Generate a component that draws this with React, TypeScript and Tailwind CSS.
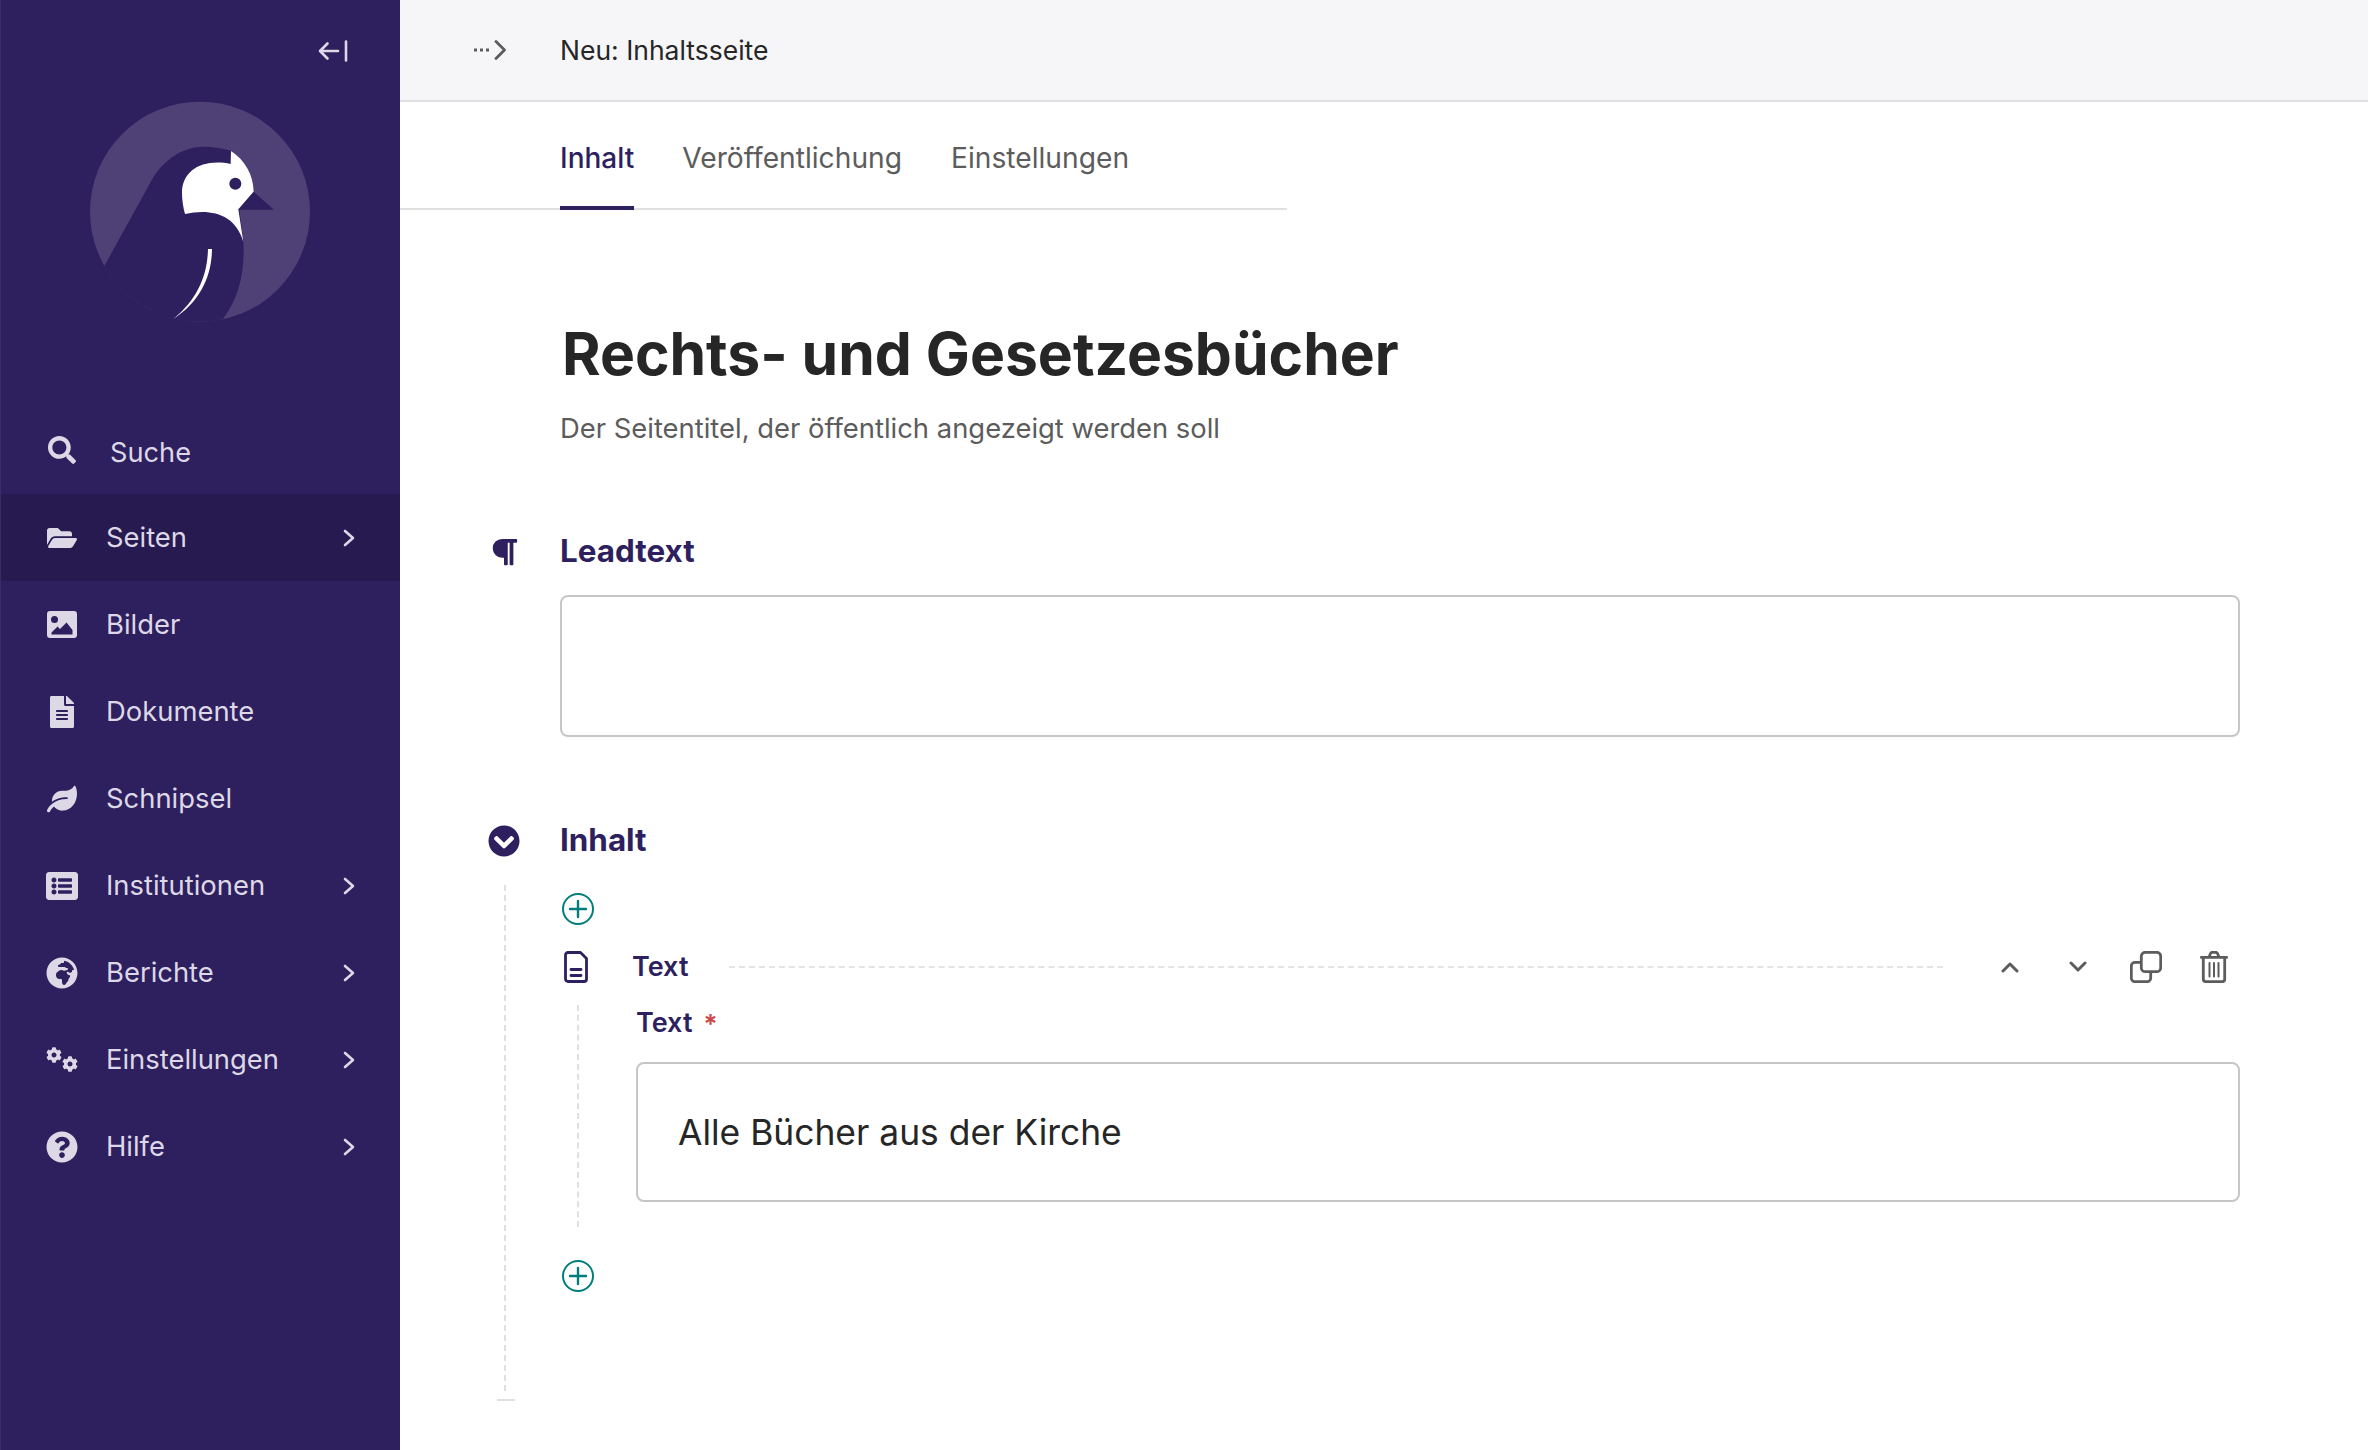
import type { ReactNode } from "react";
import {
    FaSearch,
    FaFolderOpen,
    FaFileAlt,
    FaLeaf,
    FaListAlt,
    FaGlobeAfrica,
    FaCog,
    FaQuestionCircle,
    FaParagraph,
    FaChevronCircleDown,
} from "react-icons/fa";

function ImageIcon() {
    return (
        <svg width="30" height="27" viewBox="0 0 30 27" fill="currentColor">
            <path
                fillRule="evenodd"
                d="M3 0h24a3 3 0 0 1 3 3v21a3 3 0 0 1-3 3H3a3 3 0 0 1-3-3V3a3 3 0 0 1 3-3z M7.500 5a3.500 3.500 0 1 0 0 7 3.500 3.500 0 0 0 0-7z M4.500 23.500h21v-4.500l-6-7.500-6.500 6.500-2.500-2.500-6 6z"
            />
        </svg>
    );
}

const navItems = [
    { label: "Seiten", icon: <FaFolderOpen size={30} />, arrow: true, active: true },
    { label: "Bilder", icon: <ImageIcon /> },
    { label: "Dokumente", icon: <FaFileAlt size={32} /> },
    { label: "Schnipsel", icon: <FaLeaf size={30} /> },
    { label: "Institutionen", icon: <FaListAlt size={32} />, arrow: true },
    { label: "Berichte", icon: <FaGlobeAfrica size={32} />, arrow: true },
    {
        label: "Einstellungen",
        icon: (
            <span className="flex h-[25px] w-[32px] justify-between">
                <FaCog size={16} />
                <FaCog size={16} className="self-end" />
            </span>
        ),
        arrow: true,
    },
    { label: "Hilfe", icon: <FaQuestionCircle size={32} />, arrow: true },
];

function Logo() {
    return (
        <svg width="270" height="270" viewBox="0 0 810 810">
            <circle cx="420" cy="395" r="330" fill="#4f4176" />
            <path
                d="M133 558 L270 310 C300 250 360 200 430 200 C460 200 490 205 515 213 L550 480 C555 570 540 650 488 718 A330 330 0 0 1 133 558 Z"
                fill="#2e1f5e"
            />
            <path
                d="M513 213 L512 252 C430 235 365 270 366 340 C366 360 370 385 375 402 C450 385 525 400 550 485 L535 388 L581 335 C580 285 555 240 513 213 Z"
                fill="#fff"
            />
            <circle cx="526" cy="311" r="18" fill="#2e1f5e" />
            <path d="M581 335 L642 389 L535 389 Z" fill="#2e1f5e" />
            <path d="M444 507 L456 507 C455 590 420 665 340 717 C410 660 442 590 444 507 Z" fill="#fff" />
        </svg>
    );
}

function ChevronRight() {
    return (
        <svg width="12" height="18" viewBox="0 0 12 18" fill="none" stroke="currentColor" strokeWidth="2.6" strokeLinecap="round" strokeLinejoin="round">
            <path d="M2 2l8 7-8 7" />
        </svg>
    );
}

function PlusButton() {
    return (
        <svg width="32" height="32" viewBox="0 0 32 32" fill="none" stroke="#007d7e">
            <circle cx="16" cy="16" r="15" strokeWidth="2" />
            <path d="M16 8v16M8 16h16" strokeWidth="2.4" strokeLinecap="round" />
        </svg>
    );
}

function DocIcon() {
    return (
        <svg width="24" height="32" viewBox="0 0 24 32" fill="none" stroke="#2e1f5e" strokeWidth="2.8" strokeLinejoin="round" strokeLinecap="round">
            <path d="M4 1.500h12.500l6 6V28a2.500 2.500 0 0 1-2.500 2.500H4A2.500 2.500 0 0 1 1.500 28V4A2.500 2.500 0 0 1 4 1.500z" />
            <path d="M7 18.500h10M7 24.500h10" />
        </svg>
    );
}

function BlockActions() {
    return (
        <div className="flex items-center text-[#5c5c5c]">
            <svg className="ml-[58px]" width="18" height="12" viewBox="0 0 18 12" fill="none" stroke="currentColor" strokeWidth="3" strokeLinecap="round" strokeLinejoin="round">
                <path d="M2 10l7-7 7 7" />
            </svg>
            <svg className="ml-[50px]" width="18" height="12" viewBox="0 0 18 12" fill="none" stroke="currentColor" strokeWidth="3" strokeLinecap="round" strokeLinejoin="round">
                <path d="M2 2l7 7 7-7" />
            </svg>
            <svg className="ml-[43px]" width="32" height="32" viewBox="0 0 32 32" fill="none" stroke="currentColor" strokeWidth="2.8">
                <rect x="11.300" y="1.300" width="19.400" height="19.400" rx="4" />
                <path d="M10 11.300H5a3.700 3.700 0 0 0-3.700 3.700v12A3.700 3.700 0 0 0 5 30.700h12a3.700 3.700 0 0 0 3.700-3.700v-5" />
            </svg>
            <svg className="ml-[38px]" width="28" height="32" viewBox="0 0 28 32" fill="none" stroke="currentColor" strokeWidth="2.8" strokeLinecap="round" strokeLinejoin="round">
                <path d="M1.300 6.300h25.400M9 6l1.500-3.500a2 2 0 0 1 1.800-1.200h3.400a2 2 0 0 1 1.800 1.200L19 6" />
                <path d="M3.300 6.500V28a2.700 2.700 0 0 0 2.700 2.700h16a2.700 2.700 0 0 0 2.700-2.700V6.500" />
                <path d="M9.500 12v13.500M14 12v13.500M18.500 12v13.500" strokeWidth="2" />
            </svg>
        </div>
    );
}

function Field({ children, className }: { children?: ReactNode; className: string }) {
    return <div className={"rounded-[8px] border-2 border-[#c6c6c6] bg-white " + className}>{children}</div>;
}

export default function App() {
    return (
        <div className="flex h-[1450px] w-[2368px] overflow-hidden bg-white font-['Inter',sans-serif]">
            <aside className="flex w-[400px] shrink-0 flex-col border-l border-[#3a2c68] bg-[#2e1f5e] text-[#dcd8e6]">
                <div className="flex h-[80px] items-start justify-end pt-[40px] pr-[52px]">
                    <svg width="30" height="22" viewBox="0 0 30 22" fill="none" stroke="currentColor" strokeWidth="2.600" strokeLinecap="round" strokeLinejoin="round">
                        <path d="M2 11h18M9.500 3.500L2 11l7.500 7.500M28 1.500v19" />
                    </svg>
                </div>
                <div className="ml-[59px] h-[270px]">
                    <Logo />
                </div>
                <div className="flex h-[144px] items-end">
                    <div className="flex h-[84px] w-full items-center pl-[47px]">
                        <span className="mb-[5px] flex w-[62px] justify-start"><FaSearch size={28} /></span>
                        <span className="mt-[3px] text-[27.2px]">Suche</span>
                    </div>
                </div>
                <nav className="flex flex-col">
                    {navItems.map((item) => (
                        <div key={item.label} className={"flex h-[87px] items-center " + (item.active ? "bg-[#271a50]" : "")}>
                            <span className="flex w-[105px] justify-center pl-[16px]">{item.icon}</span>
                            <span className="flex-1 pt-[1px] text-[27.4px]">{item.label}</span>
                            {item.arrow && (
                                <span className="mr-[45px] flex">
                                    <ChevronRight />
                                </span>
                            )}
                        </div>
                    ))}
                </nav>
            </aside>

            <main className="flex min-w-0 flex-1 flex-col">
                <div className="flex h-[102px] shrink-0 items-center border-b-2 border-[#e0e0e0] bg-[#f6f6f8]">
                    <svg className="ml-[73px]" width="34" height="20" viewBox="0 0 34 20" fill="none" stroke="#5c5c5c">
                        <path d="M1 10h15" strokeWidth="3" strokeDasharray="3 3" />
                        <path d="M23 1.500l8.500 8.500-8.500 8.500" strokeWidth="2.800" strokeLinecap="round" strokeLinejoin="round" />
                    </svg>
                    <span className="ml-[53px] pt-[2px] text-[26.5px] text-[#262626]">Neu: Inhaltsseite</span>
                </div>

                <div className="h-[108px] w-[887px] shrink-0 border-b-2 border-[#e0e0e0] pl-[160px]">
                    <div className="flex h-full items-start pt-[35px] text-[28.2px] text-[#5c5c5c]">
                        <span className="-mb-[2px] h-[73px] border-b-4 border-[#2e1f5e] text-[28px] font-medium text-[#2e1f5e]">Inhalt</span>
                        <span className="ml-[48px]">Veröffentlichung</span>
                        <span className="ml-[49px]">Einstellungen</span>
                    </div>
                </div>

                <div className="pr-[128px]">
                    <div className="pt-[108px] pl-[162px] text-[58.8px] leading-[72px] font-bold text-[#262626]">Rechts- und Gesetzesbücher</div>
                    <div className="pt-[21px] pl-[160px] text-[27.4px] leading-[34px] text-[#5c5c5c]">Der Seitentitel, der öffentlich angezeigt werden soll</div>

                    <div className="mt-[85px] flex h-[44px] items-center">
                        <span className="flex w-[160px] justify-start pl-[89px] text-[#2e1f5e]"><FaParagraph size={30} /></span>
                        <span className="text-[31.4px] font-bold text-[#2e1f5e]">Leadtext</span>
                    </div>
                    <Field className="mt-[21px] ml-[160px] h-[142px]" />

                    <div className="mt-[82px] flex h-[44px] items-center">
                        <span className="flex w-[160px] pl-[88px] text-[#2e1f5e]"><FaChevronCircleDown size={32} /></span>
                        <span className="text-[31.4px] font-bold text-[#2e1f5e]">Inhalt</span>
                    </div>

                    <div className="mt-[22px] ml-[104px] h-[506px] border-l-2 border-dashed border-[#e0e0e0] pl-[56px]">
                        <div className="pt-[8px]"><PlusButton /></div>
                        <div className="mt-[26px] flex h-[32px] items-center">
                            <span className="ml-[2px] w-[68px]"><DocIcon /></span>
                            <span className="text-[27px] font-semibold text-[#2e1f5e]">Text</span>
                            <span className="ml-[41px] flex-1 border-t-2 border-dashed border-[#e4e4e4]" />
                            <BlockActions />
                            <span className="w-[12px]" />
                        </div>
                        <div className="mt-[22px] ml-[15px] h-[222px] border-l-2 border-dashed border-[#e0e0e0] pl-[57px]">
                            <div className="flex h-[36px] items-center text-[27px] font-semibold text-[#2e1f5e]">
                                Text
                                <span className="ml-[11px] text-[26px] text-[#cd4444]">*</span>
                            </div>
                            <Field className="mt-[21px] flex h-[140px] items-center pt-[2px] pl-[40px] text-[35.4px] text-[#262626]">Alle Bücher aus der Kirche</Field>
                        </div>
                        <div className="mt-[33px]"><PlusButton /></div>
                    </div>
                    <div className="mt-[8px] ml-[97px] h-[2px] w-[18px] bg-[#e0e0e0]" />
                </div>
            </main>
        </div>
    );
}
